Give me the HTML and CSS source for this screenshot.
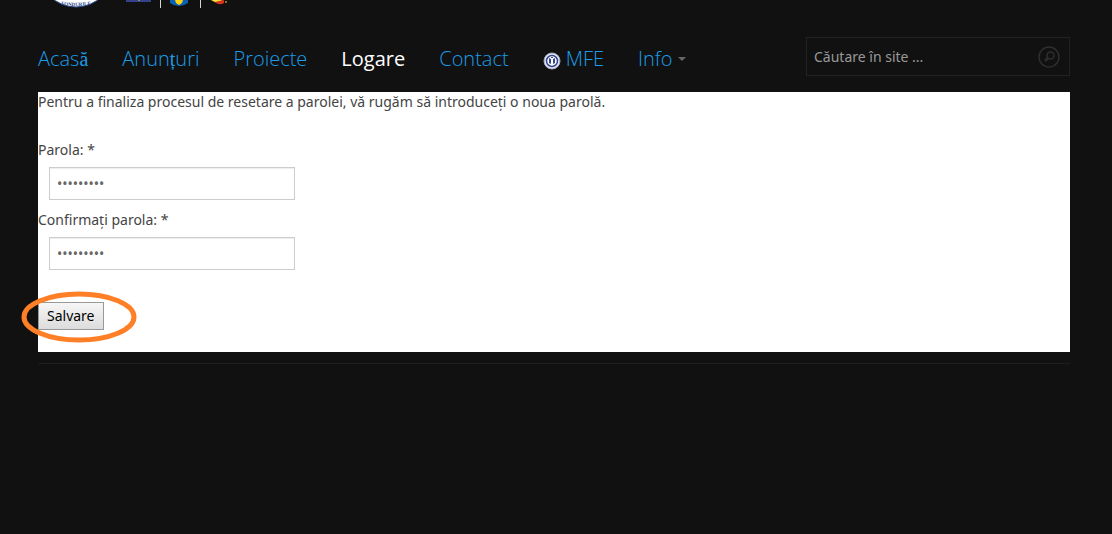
FILE: index.html
```
<!DOCTYPE html>
<html lang="ro">
<head>
    <meta charset="UTF-8">
    <meta name="viewport" content="width=device-width, initial-scale=1.0">
    <title>Resetare parolă</title>
    <link rel="stylesheet" href="styles.css">
</head>
<body>
    <div class="wrapper">
        <header>
            <svg class="logos" width="200" height="8" viewBox="0 0 200 8" aria-hidden="true">
                <circle cx="38" cy="-30" r="37" fill="#fff" stroke="#2b4a8b" stroke-width="1"/>
                <path id="seal-arc" d="M14 3 Q38 9 62 3" fill="none"/>
                <text class="seal-text"><textPath href="#seal-arc" startOffset="50%" text-anchor="middle">FONDURILE</textPath></text>
                <rect x="88" y="0" width="25" height="2" fill="#34428c"/>
                <rect x="100" y="0" width="2" height="1" fill="#8a8a62"/>
                <rect x="122" y="0" width="1" height="8" fill="#d5d5d5"/>
                <path d="M132 0 H150 V3 Q146 6 141 6 Q136 6 132 3 Z" fill="#0b61b5"/>
                <path d="M137 0 H145 L144 3 L141 5 L138 3 Z" fill="#ffd40a"/>
                <rect x="162" y="0" width="1" height="8" fill="#d5d5d5"/>
                <path d="M173 0 H184 L183 3 Q177 3 173 0 Z" fill="#f3e13a"/>
                <path d="M177 2 L181 1 L186 0 V3 Q181 6 177 2 Z" fill="#d8321f"/>
                <circle cx="188" cy="2" r="1" fill="#b58b25"/>
            </svg>
        </header>

        <div class="menubar">
            <nav>
                <ul class="menu">
                    <li><a href="#">Acas<span class="serif">ă</span></a></li>
                    <li><a href="#">Anun<span class="serif">ț</span>uri</a></li>
                    <li><a href="#">Proiecte</a></li>
                    <li><a href="#" class="active">Logare</a></li>
                    <li><a href="#">Contact</a></li>
                    <li>
                        <a href="#">
                            <svg class="seal" width="18" height="18" viewBox="0 0 18 18" aria-hidden="true">
                                <circle cx="9" cy="9" r="8" fill="#e4e6f2" stroke="#a5acca"/>
                                <circle cx="9" cy="9" r="5.5" fill="#fff" stroke="#34468c" stroke-width="1.5"/>
                                <path d="M6 6 L8 7 V12 L6 11 Z M12 6 L10 7 V12 L12 11 Z M8 5 H10 V6 H8 Z" fill="#34468c"/>
                            </svg>MFE</a>
                    </li>
                    <li><a href="#" class="parent">Info</a></li>
                </ul>
            </nav>
            <form class="search" role="search">
                <input type="search" aria-label="Căutare în site" placeholder="Căutare în site ...">
                <button type="submit" aria-label="Caută">
                    <svg width="22" height="22" viewBox="0 0 22 22" fill="none" stroke="#2e2e2e">
                        <circle cx="11" cy="11" r="10" stroke-width="1.5"/>
                        <circle cx="12.5" cy="9.5" r="3.5" stroke-width="1.5"/>
                        <path d="M10 12 L7 15" stroke-width="2.5"/>
                    </svg>
                </button>
            </form>
        </div>

        <main>
            <form class="reset-form">
                <p>Pentru a finaliza procesul de resetare a parolei, vă rugăm să introduceți o noua parolă.</p>
                <div class="field">
                    <label for="password1">Parola: *</label>
                    <input type="password" id="password1" name="password1" value="parola123">
                </div>
                <div class="field">
                    <label for="password2">Confirmați parola: *</label>
                    <input type="password" id="password2" name="password2" value="parola123">
                </div>
                <div class="actions">
                    <button type="submit" class="save-btn">Salvare</button>
                    <svg class="highlight" width="116" height="52" viewBox="0 0 116 52" aria-hidden="true">
                        <ellipse cx="58" cy="26" rx="55" ry="23" fill="none" stroke="#ff7f27" stroke-width="5"/>
                    </svg>
                </div>
            </form>
        </main>

        <footer></footer>
    </div>
</body>
</html>
```

FILE: styles.css
```
* {
    box-sizing: border-box;
}
body {
    margin: 0;
    background: #111;
    color: #444;
    font-family: "Noto Sans", "Open Sans", sans-serif;
    font-size: 14px;
    line-height: 20px;
}
.wrapper {
    margin: 0 42px 0 38px;
}
.logos {
    display: block;
}
.seal-text {
    font-family: "Liberation Serif", serif;
    font-size: 5px;
    font-weight: bold;
    fill: #2b4a8b;
}
.menubar {
    display: flex;
    justify-content: space-between;
    align-items: flex-start;
    height: 84px;
    padding-top: 29px;
}
.menu {
    display: flex;
    gap: 34px;
    margin: 0;
    padding: 0;
    list-style: none;
}
.menu a {
    display: flex;
    align-items: baseline;
    color: #1c9ce6;
    font-family: "Open Sans", sans-serif;
    font-size: 20px;
    font-weight: 300;
    line-height: 44px;
    text-decoration: none;
}
.menu a.active {
    color: #fff;
    font-weight: 400;
}
.menu .serif {
    font-family: "Liberation Serif", serif;
    font-weight: 400;
}
.seal {
    align-self: center;
    margin: 4px 5px 0 0;
}
.parent::after {
    content: "";
    align-self: center;
    margin-left: 5px;
    border: 4px solid transparent;
    border-top-color: #666;
    border-bottom: 0;
}
.search {
    display: flex;
    align-items: center;
    width: 264px;
    height: 39px;
    padding: 0 9px 0 7px;
    border: 1px solid #222;
}
.search input {
    flex: 1;
    min-width: 0;
    padding: 0;
    border: 0;
    background: none;
    color: #999;
    font: inherit;
    outline: none;
}
.search input::placeholder {
    color: #999;
}
.search button {
    padding: 0;
    border: 0;
    background: none;
    cursor: pointer;
}
.search svg {
    display: block;
}
main {
    background: #fff;
    padding-bottom: 22px;
}
.reset-form p {
    margin: 0 0 28px;
}
.field {
    margin-bottom: 10px;
}
.field label {
    display: block;
    margin-bottom: 7px;
}
.field input {
    display: block;
    width: 246px;
    height: 33px;
    margin-left: 11px;
    padding: 0 7px;
    border: 1px solid #ccc;
    background: #fff;
    box-shadow: inset 0 1px 1px rgba(0,0,0,0.07);
    color: #666;
    font: inherit;
}
.actions {
    position: relative;
    margin-top: 32px;
}
.save-btn {
    display: block;
    height: 28px;
    padding: 0 8px;
    border: 1px solid #999;
    background: linear-gradient(#f6f6f6, #dcdcdc);
    color: #000;
    font: inherit;
    cursor: pointer;
}
.highlight {
    position: absolute;
    top: -11px;
    left: -17px;
    pointer-events: none;
}
footer {
    margin-top: 11px;
    border-top: 1px solid #1e1e1e;
}
```
